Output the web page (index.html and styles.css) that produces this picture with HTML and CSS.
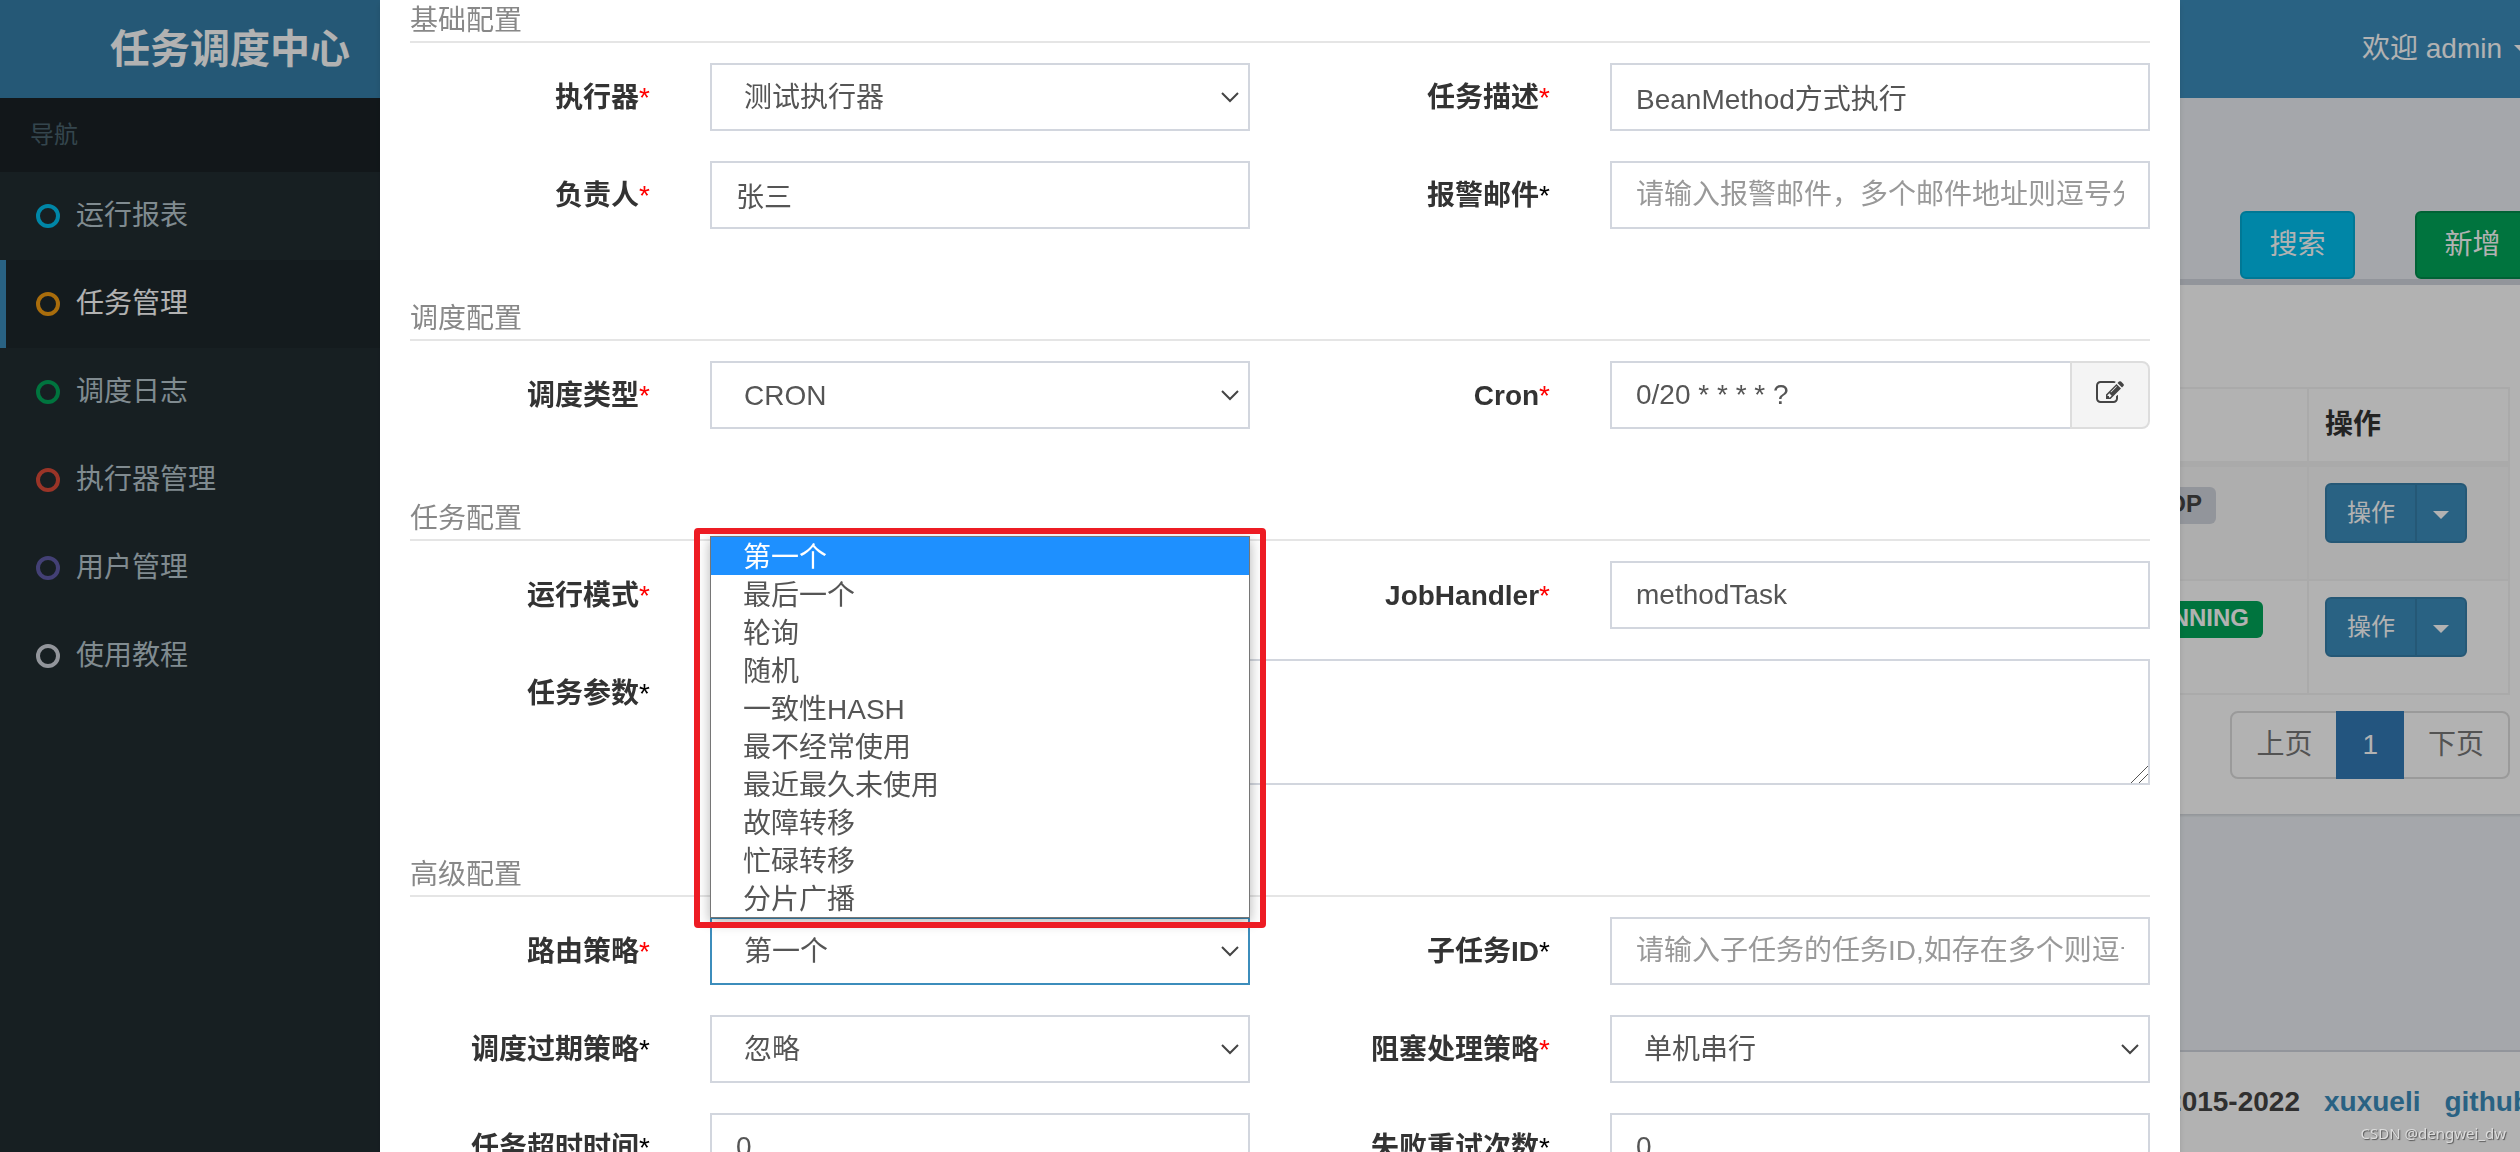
FILE: index.html
```html
<!DOCTYPE html>
<html lang="zh-CN">
<head>
    <meta charset="UTF-8">
    <meta name="viewport" content="width=device-width, initial-scale=1.0">
    <title>任务调度中心</title>
    <link rel="stylesheet" href="styles.css">
</head>
<body>

    <div class="wrapper">
        <header class="main-header">
            <a href="#" class="logo">任务调度中心</a>
            <nav class="navbar">
                <a href="#" class="user-menu">欢迎 admin <span class="caret"></span></a>
            </nav>
        </header>

        <div class="main-row">
            <aside class="sidebar">
                <div class="menu-header">导航</div>
                <ul class="sidebar-menu">
                    <li><a href="#"><svg class="circle aqua" viewBox="0 0 24 24"><circle cx="12" cy="12" r="10"/></svg>运行报表</a></li>
                    <li class="active"><a href="#"><svg class="circle yellow" viewBox="0 0 24 24"><circle cx="12" cy="12" r="10"/></svg>任务管理</a></li>
                    <li><a href="#"><svg class="circle green" viewBox="0 0 24 24"><circle cx="12" cy="12" r="10"/></svg>调度日志</a></li>
                    <li><a href="#"><svg class="circle red" viewBox="0 0 24 24"><circle cx="12" cy="12" r="10"/></svg>执行器管理</a></li>
                    <li><a href="#"><svg class="circle purple" viewBox="0 0 24 24"><circle cx="12" cy="12" r="10"/></svg>用户管理</a></li>
                    <li><a href="#"><svg class="circle gray" viewBox="0 0 24 24"><circle cx="12" cy="12" r="10"/></svg>使用教程</a></li>
                </ul>
            </aside>

            <div class="page">
                <main class="content">
                    <div class="toolbar">
                        <button type="button" class="btn btn-info">搜索</button>
                        <button type="button" class="btn btn-success">新增</button>
                    </div>

                    <div class="box">
                        <table class="job-table">
                            <thead>
                                <tr>
                                    <th></th>
                                    <th class="col-status">状态</th>
                                    <th class="col-action">操作</th>
                                </tr>
                            </thead>
                            <tbody>
                                <tr>
                                    <td></td>
                                    <td><span class="label label-default">STOP</span></td>
                                    <td>
                                        <div class="btn-group">
                                            <button type="button" class="btn-sm">操作</button>
                                            <button type="button" class="btn-sm btn-toggle" aria-label="更多操作"><span class="caret"></span></button>
                                        </div>
                                    </td>
                                </tr>
                                <tr>
                                    <td></td>
                                    <td><span class="label label-success">RUNNING</span></td>
                                    <td>
                                        <div class="btn-group">
                                            <button type="button" class="btn-sm">操作</button>
                                            <button type="button" class="btn-sm btn-toggle" aria-label="更多操作"><span class="caret"></span></button>
                                        </div>
                                    </td>
                                </tr>
                            </tbody>
                        </table>
                        <ul class="pagination">
                            <li><a href="#">上页</a></li>
                            <li class="active"><a href="#">1</a></li>
                            <li><a href="#">下页</a></li>
                        </ul>
                    </div>
                </main>

                <footer class="main-footer">
                    <span>Copyright © 2015-2022</span>
                    <a href="#">xuxueli</a>
                    <a href="#">github</a>
                </footer>
            </div>
        </div>
    </div>

    <!-- edit job modal -->
    <div class="modal">
        <form class="modal-dialog">
            <section class="fieldset">
                <h4>基础配置</h4>
                <div class="form-group">
                    <label for="jobGroup">执行器<span class="required">*</span></label>
                    <div class="field">
                        <select id="jobGroup" class="form-control"><option>测试执行器</option></select>
                    </div>
                    <label for="jobDesc">任务描述<span class="required">*</span></label>
                    <div class="field">
                        <input type="text" id="jobDesc" class="form-control" value="BeanMethod方式执行">
                    </div>
                </div>
                <div class="form-group">
                    <label for="author">负责人<span class="required">*</span></label>
                    <div class="field">
                        <input type="text" id="author" class="form-control" value="张三">
                    </div>
                    <label for="alarmEmail">报警邮件<span class="optional">*</span></label>
                    <div class="field">
                        <input type="text" id="alarmEmail" class="form-control" placeholder="请输入报警邮件，多个邮件地址则逗号分隔">
                    </div>
                </div>
            </section>

            <section class="fieldset">
                <h4>调度配置</h4>
                <div class="form-group">
                    <label for="scheduleType">调度类型<span class="required">*</span></label>
                    <div class="field">
                        <select id="scheduleType" class="form-control"><option>CRON</option></select>
                    </div>
                    <label for="cron">Cron<span class="required">*</span></label>
                    <div class="field input-group">
                        <input type="text" id="cron" class="form-control" value="0/20 * * * * ?">
                        <button type="button" class="addon" aria-label="编辑 Cron">
                            <svg viewBox="0 0 1792 1792"><path d="M888 1184l116-116-152-152-116 116v56h96v96h56zm440-720q-16-16-33 1l-350 350q-17 17-1 33t33-1l350-350q17-17 1-33zm80 594v190q0 119-84.5 203.5t-203.500 84.500h-832q-119 0-203.500-84.500t-84.500-203.500v-832q0-119 84.500-203.500t203.500-84.500h832q63 0 117 25 15 7 18 23 3 17-9 29l-49 49q-14 14-32 8-23-6-45-6h-832q-66 0-113 47t-47 113v832q0 66 47 113t113 47h832q66 0 113-47t47-113v-126q0-13 9-22l64-64q15-15 35-7t20 29zm-96-738l288 288-672 672h-288v-288zm444 132l-92 92-288-288 92-92q28-28 68-28t68 28l152 152q28 28 28 68t-28 68z"/></svg>
                        </button>
                    </div>
                </div>
            </section>

            <section class="fieldset">
                <h4>任务配置</h4>
                <div class="form-group">
                    <label for="glueType">运行模式<span class="required">*</span></label>
                    <div class="field">
                        <select id="glueType" class="form-control"><option>BEAN</option></select>
                    </div>
                    <label for="jobHandler">JobHandler<span class="required">*</span></label>
                    <div class="field">
                        <input type="text" id="jobHandler" class="form-control" value="methodTask">
                    </div>
                </div>
                <div class="form-group">
                    <label for="executorParam">任务参数<span class="optional">*</span></label>
                    <div class="field field-wide">
                        <textarea id="executorParam" class="form-control"></textarea>
                    </div>
                </div>
            </section>

            <section class="fieldset">
                <h4>高级配置</h4>
                <div class="form-group">
                    <label for="routeStrategy">路由策略<span class="required">*</span></label>
                    <div class="field">
                        <div class="dropdown open">
                            <select id="routeStrategy" class="form-control"><option>第一个</option></select>
                            <ul class="dropdown-menu" role="listbox">
                                <li role="option" class="selected" aria-selected="true">第一个</li>
                                <li role="option">最后一个</li>
                                <li role="option">轮询</li>
                                <li role="option">随机</li>
                                <li role="option">一致性HASH</li>
                                <li role="option">最不经常使用</li>
                                <li role="option">最近最久未使用</li>
                                <li role="option">故障转移</li>
                                <li role="option">忙碌转移</li>
                                <li role="option">分片广播</li>
                            </ul>
                        </div>
                    </div>
                    <label for="childJobId">子任务ID<span class="optional">*</span></label>
                    <div class="field">
                        <input type="text" id="childJobId" class="form-control" placeholder="请输入子任务的任务ID,如存在多个则逗号分隔">
                    </div>
                </div>
                <div class="form-group">
                    <label for="misfire">调度过期策略<span class="optional">*</span></label>
                    <div class="field">
                        <select id="misfire" class="form-control"><option>忽略</option></select>
                    </div>
                    <label for="block">阻塞处理策略<span class="required">*</span></label>
                    <div class="field">
                        <select id="block" class="form-control"><option>单机串行</option></select>
                    </div>
                </div>
                <div class="form-group">
                    <label for="timeout">任务超时时间<span class="optional">*</span></label>
                    <div class="field">
                        <input type="text" id="timeout" class="form-control" value="0">
                    </div>
                    <label for="retry">失败重试次数<span class="optional">*</span></label>
                    <div class="field">
                        <input type="text" id="retry" class="form-control" value="0">
                    </div>
                </div>
            </section>
        </form>
    </div>

    <div class="watermark">CSDN @dengwei_dw</div>

</body>
</html>
```
FILE: styles.css
```css
* {
    box-sizing: border-box;
}
body {
    margin: 0;
    height: 100vh;
    overflow: hidden;
    font-family: "Liberation Sans", "Noto Sans CJK SC", sans-serif;
    font-size: 28px;
    line-height: 40px;
    color: #333;
}
a {
    color: #3c8dbc;
    text-decoration: none;
}
ul {
    list-style: none;
    margin: 0;
    padding: 0;
}
button, input, select, textarea {
    font-family: inherit;
    font-size: inherit;
    line-height: inherit;
    margin: 0;
}

/* page behind the modal */
.wrapper {
    display: flex;
    flex-direction: column;
    width: calc(100% + 40px);
    min-height: 100vh;
}
.main-header {
    display: flex;
    height: 98px;
}
.logo {
    width: 460px;
    background-color: #367fa9;
    color: #fff;
    font-size: 40px;
    font-weight: bold;
    line-height: 98px;
    text-align: center;
}
.navbar {
    flex: 1;
    display: flex;
    justify-content: flex-end;
    align-items: center;
    padding-right: 30px;
    background-color: #3c8dbc;
}
.user-menu {
    display: flex;
    align-items: center;
    gap: 12px;
    color: #fff;
}
.caret {
    display: inline-block;
    border-top: 8px solid;
    border-left: 8px solid transparent;
    border-right: 8px solid transparent;
}
.main-row {
    flex: 1;
    display: flex;
}
.sidebar {
    width: 460px;
    background-color: #222d32;
}
.menu-header {
    padding: 20px 30px;
    background-color: #1a2226;
    color: #4b646f;
    font-size: 24px;
    line-height: 34px;
}
.sidebar-menu a {
    display: flex;
    align-items: center;
    padding: 24px 30px;
    border-left: 6px solid transparent;
    color: #b8c7ce;
}
.sidebar-menu .active a {
    background-color: #1e282c;
    border-left-color: #3c8dbc;
    color: #fff;
}
.circle {
    width: 24px;
    height: 24px;
    margin-right: 16px;
    fill: none;
    stroke: currentColor;
    stroke-width: 4;
}
.aqua { color: #00c0ef; }
.yellow { color: #f39c12; }
.green { color: #00a65a; }
.red { color: #dd4b39; }
.purple { color: #605ca8; }
.gray { color: #d2d6de; }

.page {
    flex: 1;
    display: flex;
    flex-direction: column;
    background-color: #ecf0f5;
}
.content {
    flex: 1;
    padding: 113px 30px 0;
}
.toolbar {
    display: flex;
    justify-content: flex-end;
    gap: 60px;
}
.btn {
    width: 115px;
    height: 68px;
    border: 2px solid;
    border-radius: 6px;
    color: #fff;
}
.btn-info {
    background-color: #00c0ef;
    border-color: #00acd6;
}
.btn-success {
    background-color: #00a65a;
    border-color: #008d4c;
}
.box {
    padding: 102px 20px 35px;
    background-color: #fff;
    border-top: 6px solid #d2d6de;
    box-shadow: 0 2px 2px rgba(0, 0, 0, 0.1);
}
.job-table {
    width: 100%;
    table-layout: fixed;
    border-collapse: separate;
    border-spacing: 0;
    border: 2px solid #f4f4f4;
    border-left: 0;
}
.job-table th, .job-table td {
    padding: 16px;
    border-left: 2px solid #f4f4f4;
    text-align: left;
    vertical-align: top;
}
.job-table th {
    height: 78px;
    border-bottom: 6px solid #f4f4f4;
}
.job-table td {
    height: 112px;
}
.job-table tbody tr:nth-child(odd) {
    background-color: #f9f9f9;
}
.job-table tbody tr + tr td {
    height: 114px;
    border-top: 2px solid #f4f4f4;
}
.col-status {
    width: 202px;
}
.col-action {
    width: 201px;
}
.label {
    display: inline-block;
    margin-top: 3px;
    padding: 4px 14px 7px;
    border-radius: 6px;
    font-size: 24px;
    font-weight: bold;
    line-height: 26px;
}
.label-default {
    background-color: #d2d6de;
    color: #444;
}
.label-success {
    background-color: #00a65a;
    color: #fff;
}
.btn-group {
    display: flex;
}
.btn-sm {
    height: 60px;
    padding: 0 20px;
    background-color: #3c8dbc;
    border: 2px solid #367fa9;
    border-radius: 6px 0 0 6px;
    color: #fff;
    font-size: 24px;
    line-height: 36px;
}
.btn-toggle {
    display: flex;
    align-items: center;
    justify-content: center;
    width: 52px;
    margin-left: -2px;
    padding: 4px 0 0;
    border-radius: 0 6px 6px 0;
}
.pagination {
    display: flex;
    justify-content: flex-end;
    margin-top: 16px;
}
.pagination a {
    display: block;
    padding: 12px 24px;
    border: 2px solid #ddd;
    color: #777;
}
.pagination li + li {
    margin-left: -2px;
}
.pagination li:first-child a {
    border-radius: 8px 0 0 8px;
}
.pagination li:last-child a {
    border-radius: 0 8px 8px 0;
}
.pagination .active {
    z-index: 1;
}
.pagination .active a {
    background-color: #337ab7;
    border-color: #337ab7;
    color: #fff;
}
.main-footer {
    display: flex;
    justify-content: flex-end;
    gap: 24px;
    padding: 30px;
    background-color: #fff;
    border-top: 2px solid #d2d6de;
    color: #444;
    font-weight: bold;
}

/* modal */
.modal {
    position: fixed;
    top: 0;
    left: 0;
    z-index: 10;
    width: calc(100% + 40px);
    height: 100%;
    overflow: hidden;
    background-color: rgba(0, 0, 0, 0.3);
}
.modal-dialog {
    width: 1800px;
    max-width: 100%;
    margin: 0 auto;
    padding-top: 1px;
    background-color: #fff;
    box-shadow: 0 4px 6px rgba(0, 0, 0, 0.125);
}
.fieldset {
    padding-bottom: 40px;
}
.fieldset h4 {
    margin: 0 30px 20px;
    border-bottom: 2px solid #e5e5e5;
    color: #888;
    font-size: 28px;
    font-weight: normal;
}
.form-group {
    display: grid;
    grid-template-columns: 1fr 2fr 1fr 2fr;
    margin-bottom: 30px;
}
.form-group label {
    padding: 15px 30px 0;
    font-weight: bold;
    text-align: right;
    white-space: nowrap;
}
.required, .optional {
    font-weight: normal;
}
.required {
    color: #f00;
}
.optional {
    color: #000;
}
.field {
    min-width: 0;
    padding: 0 30px;
}
.field-wide {
    grid-column: 2 / -1;
}
.form-control {
    display: block;
    width: 100%;
    height: 68px;
    padding: 12px 24px;
    background-color: #fff;
    border: 2px solid #d2d6de;
    border-radius: 0;
    color: #555;
}
.form-control::placeholder {
    color: #999;
}
select.form-control {
    appearance: none;
    padding: 2px 32px 0;
    background-image: url("data:image/svg+xml,%3Csvg xmlns='http://www.w3.org/2000/svg' width='18' height='11'%3E%3Cpath d='M1 1l8 8 8-8' fill='none' stroke='%23444' stroke-width='2'/%3E%3C/svg%3E");
    background-repeat: no-repeat;
    background-position: right 9px center;
}
textarea.form-control {
    height: 126px;
    resize: vertical;
    background-image: url("data:image/svg+xml,%3Csvg xmlns='http://www.w3.org/2000/svg' width='17' height='17'%3E%3Cpath d='M0 17L17 0M8 17l9-9' fill='none' stroke='%23555'/%3E%3C/svg%3E");
    background-repeat: no-repeat;
    background-position: right bottom;
}
textarea.form-control::-webkit-resizer {
    background: none;
}
.input-group {
    display: flex;
}
.input-group .form-control {
    flex: 1;
    min-width: 0;
    border-right: 0;
}
.addon {
    width: 80px;
    padding: 0 0 4px;
    background-color: #f4f4f4;
    border: 2px solid #ddd;
    border-radius: 0 8px 8px 0;
}
.addon svg {
    display: block;
    width: 28px;
    height: 28px;
    margin: 0 auto;
    fill: #444;
}
.dropdown {
    position: relative;
}
.dropdown.open .form-control {
    border-color: #3c8dbc;
}
.dropdown-menu {
    position: absolute;
    left: 0;
    right: 0;
    bottom: calc(100% - 1px);
    background-color: #fff;
    border: 1px solid #767676;
    box-shadow: 0 4px 12px rgba(0, 0, 0, 0.3);
}
.dropdown-menu li {
    padding: 4px 0 0 32px;
    line-height: 34px;
    color: #555;
}
.dropdown-menu .selected {
    background-color: #1e90ff;
    color: #fff;
}
/* red marker frame round the open list */
.dropdown-menu::after {
    content: "";
    position: absolute;
    inset: -9px -17px -11px;
    border: 6px solid #ed1c24;
    border-radius: 4px;
}
.watermark {
    position: fixed;
    right: 14px;
    bottom: 7px;
    z-index: 20;
    color: #ddd;
    font-family: "Noto Sans", sans-serif;
    font-size: 15px;
    line-height: 24px;
    text-shadow: 1px 1px 1px #555;
}
```
